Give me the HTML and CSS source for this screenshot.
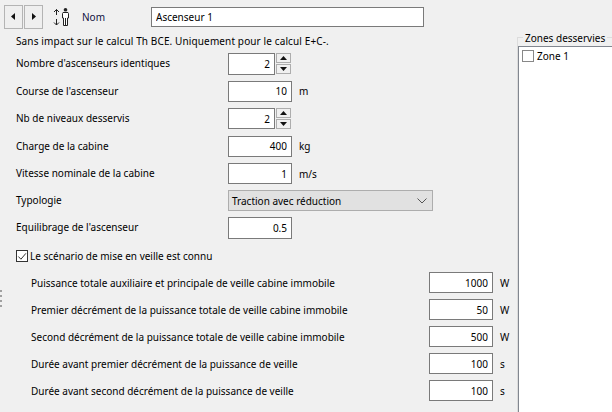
FILE: index.html
```html
<!DOCTYPE html>
<html lang="fr">
<head>
<meta charset="utf-8">
<title>Ascenseur</title>
<link rel="stylesheet" href="styles.css">
</head>
<body>
<div class="app">
  <main class="form">
    <div class="toolbar">
      <button class="nav"><svg width="5" height="7" viewBox="0 0 5 7"><path d="M4 0v7L0 3.5z" fill="#111"/></svg></button>
      <button class="nav"><svg width="5" height="7" viewBox="0 0 5 7"><path d="M1 0v7l4-3.5z" fill="#111"/></svg></button>
      <svg class="lift" width="17" height="18" viewBox="0 0 17 18">
        <path d="M3.500 1.500v5.500M1 4l2.500-2.500L6 4M3.500 11v6M1 14.500 3.500 17 6 14.500" fill="none" stroke="#222" stroke-width="1"/>
        <circle cx="12.500" cy="1.800" r="1.800" fill="#222"/>
        <path d="M10 4.500h5l.5 1v4.500h-1v7.500h-4V10h-1V5.500z" fill="#fff" stroke="#222" stroke-width="1"/>
        <path d="M12.500 10v8" stroke="#222" stroke-width="1"/>
      </svg>
      <label class="name-label">Nom</label>
      <input class="field name-field" value="Ascenseur 1">
    </div>
    <p class="notice">Sans impact sur le calcul Th BCE. Uniquement pour le calcul E+C-.</p>
    <div class="rows">
      <div class="row"><span class="label up">Nombre d'ascenseurs identiques</span><div class="spin"><input class="field num tall" value="2"><div class="spin-btns"><button><svg width="7" height="4" viewBox="0 0 7 4"><path d="M0 4h7L3.500 0z" fill="#111"/></svg></button><button><svg width="7" height="4" viewBox="0 0 7 4"><path d="M0 0h7L3.500 4z" fill="#111"/></svg></button></div></div></div>
      <div class="row"><span class="label">Course de l'ascenseur</span><input class="field num wide" value="10"><span class="unit">m</span></div>
      <div class="row"><span class="label up1">Nb de niveaux desservis</span><div class="spin"><input class="field num" value="2"><div class="spin-btns"><button><svg width="7" height="4" viewBox="0 0 7 4"><path d="M0 4h7L3.500 0z" fill="#111"/></svg></button><button><svg width="7" height="4" viewBox="0 0 7 4"><path d="M0 0h7L3.500 4z" fill="#111"/></svg></button></div></div></div>
      <div class="row"><span class="label">Charge de la cabine</span><input class="field num wide" value="400"><span class="unit">kg</span></div>
      <div class="row"><span class="label up1">Vitesse nominale de la cabine</span><input class="field num wide" value="1"><span class="unit">m/s</span></div>
      <div class="row"><span class="label up1">Typologie</span><div class="select"><span>Traction avec réduction</span><svg width="10" height="6" viewBox="0 0 10 6"><path d="M.5.500 5 5 9.500.500" fill="none" stroke="#555"/></svg></div></div>
      <div class="row"><span class="label up1">Equilibrage de l'ascenseur</span><input class="field num wide tall" value="0.5"></div>
    </div>
    <div class="check-row"><span class="check"><svg width="11" height="11" viewBox="0 0 11 11"><path d="M1.500 5.500 4.300 8.500 9.800 2" fill="none" stroke="#333" stroke-width="1.100"/></svg></span><span>Le scénario de mise en veille est connu</span></div>
    <div class="standby">
      <div class="row s"><span class="label">Puissance totale auxiliaire et principale de veille cabine immobile</span><input class="field num wide" value="1000"><span class="unit">W</span></div>
      <div class="row s"><span class="label">Premier décrément de la puissance totale de veille cabine immobile</span><input class="field num wide" value="50"><span class="unit">W</span></div>
      <div class="row s"><span class="label">Second décrément de la puissance totale de veille cabine immobile</span><input class="field num wide" value="500"><span class="unit">W</span></div>
      <div class="row s"><span class="label">Durée avant premier décrément de la puissance de veille</span><input class="field num wide" value="100"><span class="unit">s</span></div>
      <div class="row s"><span class="label">Durée avant second décrément de la puissance de veille</span><input class="field num wide" value="100"><span class="unit">s</span></div>
    </div>
    <div class="grip"><i></i><i></i><i></i><i></i></div>
  </main>
  <aside class="zones">
    <span class="legend">Zones desservies</span>
    <div class="list"><div class="item"><span class="check off"></span><span>Zone 1</span></div></div>
  </aside>
</div>
</body>
</html>
```
FILE: styles.css
```css
* { box-sizing: border-box; }
html, body { margin: 0; height: 100%; }
body { background: #f0f0f0; color: #000; font: 10px/14px "Noto Sans", "Open Sans", sans-serif; overflow: hidden; }
.app { display: flex; height: 412px; width: 612px; }
.form { position: relative; width: 517px; flex: none; padding: 4px 0 0 4px; }
.toolbar { display: flex; align-items: center; height: 25px; }
.nav { width: 19px; height: 24px; margin-right: 1px; padding: 0; background: #efefef; border: 1px solid #b4b4b4; display: flex; align-items: center; justify-content: center; }
.lift { margin-left: 9px; }
.name-label { margin-left: 12px; width: 69px; color: #101040; }
.name-field { width: 273px; height: 20px; padding: 0 4px; text-align: left; }
.field { border: 1px solid #7a7a7a; background: #fff; font: inherit; color: #000; outline: none; border-radius: 0; }
.notice { margin: 5px 0 0 12px; height: 14px; letter-spacing: .12px; }
.rows { margin-top: 5.200px; display: flex; flex-direction: column; gap: 5.900px; padding-left: 12px; }
.row { display: flex; align-items: center; height: 21.500px; }
.label { width: 212px; flex: none; }
.label.up { margin-top: -2px; }
.label.up1 { margin-top: -2px; }
.num { height: 21px; padding: 0 4px; text-align: right; width: 47px; }
.num.tall { height: 22px; }
.wide { width: 64px; }
.unit { margin-left: 7px; }
.spin { display: flex; align-items: center; gap: 1px; }
.spin-btns { display: flex; flex-direction: column; gap: 1px; }
.spin-btns button { width: 15px; height: 10px; padding: 0; background: #f0f0f0; border: 1px solid #adadad; display: flex; align-items: center; justify-content: center; }
.select { width: 205px; height: 21px; background: #e1e1e1; border: 1px solid #adadad; display: flex; align-items: center; justify-content: space-between; padding: 0 5px 0 3px; }
.check-row { display: flex; align-items: center; gap: 2px; margin: 10px 0 0 12px; height: 14px; }
.check { width: 12px; height: 12px; border: 1px solid #333; background: #fff; display: flex; align-items: center; justify-content: center; flex: none; }
.check.off { border-color: #888; }
.standby { margin-top: 9px; padding-left: 27px; display: flex; flex-direction: column; gap: 6px; }
.row.s { height: 21px; }
.row.s .label { width: 398px; }
.grip { position: absolute; left: 0; top: 290px; display: flex; flex-direction: column; gap: 3px; }
.grip i { display: block; width: 2px; height: 2px; background: #a0a0a0; }
.zones { position: relative; flex: 1; margin-top: 37px; border-top: 1px solid #dcdcdc; border-left: 1px solid #dcdcdc; padding-top: 8px; }
.legend { position: absolute; left: 5px; top: -7px; padding: 0 2px; background: #f0f0f0; white-space: nowrap; }
.list { background: #fff; height: 100%; border-top: 1px solid #828790; border-left: 1px solid #828790; padding: 2px 3px; }
.item { display: flex; align-items: center; gap: 3px; height: 14px; }
```
